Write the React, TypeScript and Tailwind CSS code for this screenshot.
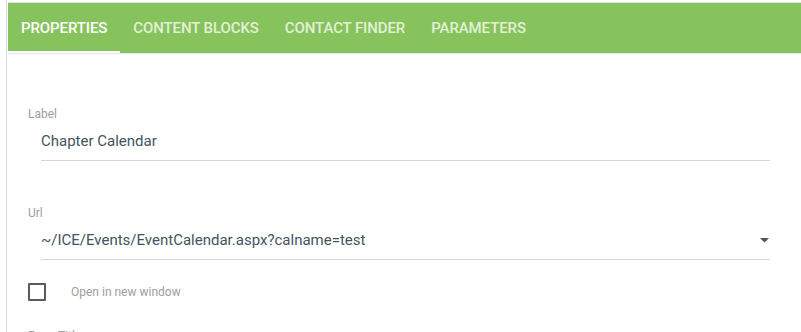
import React from "react";

const tabs = ["PROPERTIES", "CONTENT BLOCKS", "CONTACT FINDER", "PARAMETERS"];

export default function App() {
  return (
    <div
      className="w-[801px] h-[332px] overflow-hidden bg-white pl-[6px]"
      style={{ fontFamily: "Roboto, 'Liberation Sans', sans-serif" }}
    >
      <div className="h-full border-l border-[#d5dce1] pl-[1px] pt-[2px]">
        <div className="border-t border-[#dde2e5]">
          <div className="flex h-[51px] bg-[#86c35c] border-b border-[#e4e7e9]">
            {tabs.map((t, i) => (
              <div
                key={t}
                className={
                  "relative flex items-center px-[13px] pt-[1px] text-[15px] font-medium tracking-[-0.1px] " +
                  (i === 0 ? "text-white" : "text-[#e2f0d5]")
                }
              >
                {t}
                {i === 0 && (
                  <div className="absolute left-0 right-0 bottom-0 h-[2px] bg-white" />
                )}
              </div>
            ))}
          </div>
        </div>

        <div className="pl-[20px] pr-[31px] pt-[53px]">
          <div className="h-[14px] leading-[14px] text-[12px] text-[#9e9e9e]">Label</div>
          <div className="ml-[13px] h-[40px] flex items-center pt-[1px] border-b border-[#cfd8dc] text-[15px] text-[#44545f]">
            Chapter Calendar
          </div>

          <div className="mt-[45px] h-[14px] leading-[14px] text-[12px] text-[#9e9e9e]">Url</div>
          <div className="ml-[13px] h-[40px] flex items-center justify-between pt-[1px] border-b border-[#cfd8dc] text-[15px] text-[#44545f]">
            <span>~/ICE/Events/EventCalendar.aspx?calname=test</span>
            <svg width="9" height="5" viewBox="0 0 9 5" className="mr-[1px]">
              <path d="M0 0 L9 0 L4.5 4.5 Z" fill="#455a64" />
            </svg>
          </div>

          <div className="mt-[23px] flex items-center h-[18px]">
            <div className="w-[18px] h-[18px] border-2 border-[#5a5a5a] rounded-[1px]" />
            <span className="ml-[25px] text-[12px] text-[#9e9e9e]">Open in new window</span>
          </div>

          <div className="mt-[28px] h-[14px] leading-[14px] text-[12px] text-[#9e9e9e]">Page Title</div>
        </div>
      </div>
    </div>
  );
}
